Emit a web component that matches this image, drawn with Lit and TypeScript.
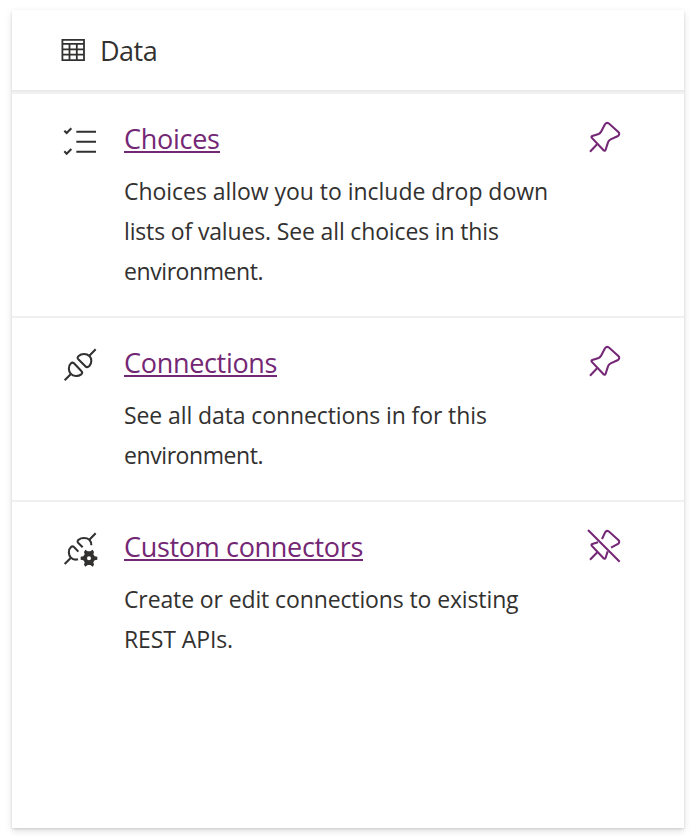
import { LitElement, html, css, svg } from "lit";
import { customElement } from "lit/decorators.js";
import { styleMap } from "lit/directives/style-map.js";

const plug = svg`
  <path d="M29 121 47 103M103 47 122 28"/>
  <path d="M57 70Q52 66 48 70C38 79 41 94 47 101C55 110 69 110 79 103Q84 98 79 93Z"/>
  <path d="M71 48C79 40 95 40 103 48C111 55 111 69 103 78Q97 84 91 79L70 58Q65 53 71 48Z"/>`;

const icons: Record<string, unknown> = {
  choices: svg`<svg class="icon" viewBox="0 0 180 150">
    <path d="M64 50.500H123M64 80.500H123M64 110.500H123"/>
    <path d="M28 47 35 54 49 40M28 109 35 116 49 102"/></svg>`,
  connections: svg`<svg class="icon" viewBox="0 -3 180 150">${plug}</svg>`,
  custom: svg`<svg class="icon" viewBox="0 -6 180 150">
    <path d="M29 117 47 99M103 44 122 25"/>
    <path d="M70 80 57 66Q52 62 48 66C38 75 41 90 47 97C53 104 61 105 69 103"/>
    <path d="M83 67 70 54Q65 49 71 44C79 37 95 37 103 44Q109 50 109 61"/>
    <path class="gear" fill-rule="evenodd" d="M91 74 98 79H106L113 74 117 81 115 88 119 94 127 95V104L119 106 115 112 117 119 113 125 106 120H98L91 125 87 119 89 112 85 106 77 104V95L85 94 89 88 87 81ZM102 94A6 6 0 1 0 102 106A6 6 0 1 0 102 94Z"/></svg>`,
};

const pin = svg`<svg class="pin" viewBox="0 0 150 150">
  <path d="M30 125 52 102"/>
  <path d="M35 83Q33 80 37 78L56 72Q61 70 64 64L75 43Q79 36 86 40L115 66Q121 72 114 78L92 88Q86 91 84 97L77 119Q74 125 70 120Z"/></svg>`;

const unpin = svg`<svg class="pin" viewBox="0 -6 150 150">
  <path d="M24 30 119 125M30 119 52 97"/>
  <path d="M54 67 37 72Q33 74 35 77L70 114Q74 119 77 113L83 94"/>
  <path d="M66 57 75 38Q79 30 86 34L115 60Q121 66 114 72L93 83"/></svg>`;

interface Run {
  text: string;
  tracking: number;
}

interface Entry {
  icon: string;
  title: Run;
  lines: Run[];
  pinned: boolean;
}

const entries: Entry[] = [
  {
    icon: "choices",
    title: { text: "Choices", tracking: -0.27 },
    lines: [
      { text: "Choices allow you to include drop down", tracking: -0.04 },
      { text: "lists of values. See all choices in this", tracking: -0.15 },
      { text: "environment.", tracking: -0.42 },
    ],
    pinned: false,
  },
  {
    icon: "connections",
    title: { text: "Connections", tracking: -0.31 },
    lines: [
      { text: "See all data connections in for this", tracking: -0.1 },
      { text: "environment.", tracking: -0.42 },
    ],
    pinned: false,
  },
  {
    icon: "custom",
    title: { text: "Custom connectors", tracking: -0.32 },
    lines: [
      { text: "Create or edit connections to existing", tracking: -0.12 },
      { text: "REST APIs.", tracking: -0.1 },
    ],
    pinned: true,
  },
];

const track = (run: Run) => styleMap({ letterSpacing: `${run.tracking}px` });

@customElement("app-root")
export class AppRoot extends LitElement {
  static styles = css`
    :host {
      display: block;
      box-sizing: border-box;
      height: 836px;
      padding: 10px 6px 8px 12px;
      overflow: hidden;
      background: #fff;
      color: #323130;
      font-family: "Open Sans", "Noto Sans", sans-serif;
    }
    .card {
      box-sizing: border-box;
      width: 672px;
      height: 818px;
      background: #fff;
      box-shadow: 0 3px 7px rgba(0, 0, 0, 0.13), 0 1px 2px rgba(0, 0, 0, 0.11);
    }
    header {
      display: flex;
      box-sizing: border-box;
      height: 84px;
      padding-left: 49px;
      border-bottom: 2px solid #f3f2f1;
      box-shadow: inset 0 -2px #eaeaea;
    }
    .table {
      width: 26px;
      height: 24px;
      margin-top: 28px;
      stroke-width: 1.8;
    }
    h1 {
      margin: 0 0 0 13px;
      font-size: 27px;
      font-weight: 400;
      line-height: 82px;
      letter-spacing: -0.5px;
    }
    section {
      display: flex;
      align-items: flex-start;
      box-sizing: border-box;
      padding: 0 0 24px 43px;
      border-bottom: 2px solid #f0f0f0;
    }
    section:last-child { border-bottom: 0; }
    svg {
      flex: none;
      fill: none;
      stroke: #323130;
      stroke-width: 6.2;
    }
    .icon {
      width: 60px;
      height: 50px;
      margin-top: 21px;
    }
    .gear { fill: #323130; stroke: none; }
    .pin {
      width: 50px;
      height: 50px;
      margin-top: 16px;
      stroke: #742774;
    }
    .text {
      width: 456px;
      margin: 26px 0 0 9px;
    }
    a {
      display: block;
      width: max-content;
      height: 31px;
      border-bottom: 2px solid #742774;
      color: #742774;
      font-size: 27px;
      line-height: 37px;
    }
    p {
      margin: 18px 0 1px;
      font-size: 23px;
      line-height: 40px;
      white-space: nowrap;
    }
    .line { display: block; width: max-content; }
  `;

  render() {
    return html`<main class="card">
      <header>
        <svg class="table" viewBox="0 0 26 24">
          <path d="M1.400 1.800H23V22.200H1.400ZM1.400 5.800H23M1.400 11.300H23M1.400 16.700H23M8.500 5.800V22M15.800 5.800V22" />
        </svg>
        <h1>Data</h1>
      </header>
      ${entries.map((e) => html`<section>
        ${icons[e.icon]}
        <div class="text">
          <a style=${track(e.title)}>${e.title.text}</a>
          <p>${e.lines.map((l) => html`<span class="line" style=${track(l)}>${l.text}</span>`)}</p>
        </div>
        ${e.pinned ? unpin : pin}
      </section>`)}
    </main>`;
  }
}
